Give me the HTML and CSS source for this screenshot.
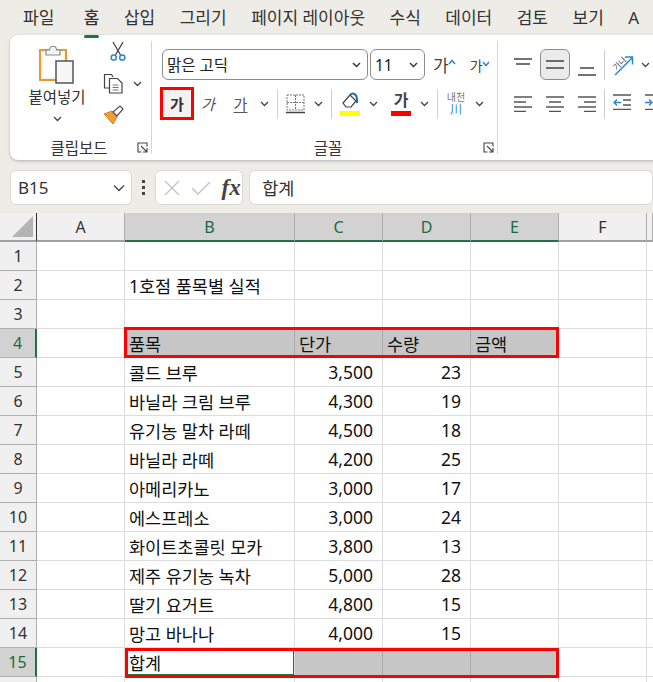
FILE: index.html
```html
<!DOCTYPE html>
<html lang="ko">
<head>
  <meta charset="UTF-8" />
  <title>Excel</title>
  <link rel="stylesheet" href="styles.css">
</head>
<body>
  <!-- Tabs -->
  <div class="tabs">
    <span>파일</span>
    <span class="tab-active">홈</span>
    <span>삽입</span>
    <span>그리기</span>
    <span>페이지 레이아웃</span>
    <span>수식</span>
    <span>데이터</span>
    <span>검토</span>
    <span>보기</span>
    <span>A</span>
  </div>

  <!-- Ribbon -->
  <div class="ribbon">
    <div class="group group-clip">
      <div class="clip-body">
        <div class="paste">
          <svg width="36" height="40" viewBox="0 0 36 40">
            <rect x="1" y="6" width="26" height="30" fill="#fdf3dd" stroke="#e8963c" stroke-width="2"/>
            <rect x="4" y="8" width="20" height="25" fill="#fff"/>
            <path d="M7 11V6h3.500c0-5 7-5 7 0H21v5z" fill="#f4f4f4" stroke="#8a8a8a" stroke-width="1.200"/>
            <rect x="17" y="17" width="17" height="22" fill="#f7f7f7" stroke="#555" stroke-width="1.500"/>
          </svg>
          <span class="paste-label">붙여넣기</span>
          <svg class="chev" width="11" height="7" viewBox="0 0 11 7"><path d="M2 2l3.500 3.500L9 2" fill="none" stroke="#444" stroke-width="1.300"/></svg>
        </div>
        <div class="clip-tools">
          <svg width="16" height="20" viewBox="0 0 16 20">
            <path d="M3 1l7.500 13M13 1L5.500 14" stroke="#444" stroke-width="1.300" fill="none"/>
            <circle cx="3.700" cy="16.500" r="2.600" fill="none" stroke="#2b88c8" stroke-width="1.500"/>
            <circle cx="12.300" cy="16.500" r="2.600" fill="none" stroke="#2b88c8" stroke-width="1.500"/>
          </svg>
          <div class="split">
            <svg width="21" height="21" viewBox="0 0 21 21">
              <path d="M9 15H1.500V1.500H8.500L10 4" fill="#fff" stroke="#444" stroke-width="1.200"/>
              <path d="M6.500 5.500h8l4.500 4.500v10h-12.500z" fill="#fff" stroke="#444" stroke-width="1.200"/>
              <path d="M9.500 12h6M9.500 14.500h6M9.500 17h6" stroke="#777"/>
            </svg>
            <svg class="chev" width="11" height="7" viewBox="0 0 11 7"><path d="M2 2l3.500 3.500L9 2" fill="none" stroke="#444" stroke-width="1.300"/></svg>
          </div>
          <svg width="21" height="20" viewBox="0 0 21 20">
            <path d="M1 9l8-3 5 6-4 7z" fill="#f0a033" stroke="#d97a1e"/>
            <path d="M10 7l7-6 3 3-6 7z" fill="#fff" stroke="#555" stroke-width="1.200"/>
          </svg>
        </div>
      </div>
      <div class="group-foot">
        <span></span>
        <span>클립보드</span>
        <svg class="launcher" width="11" height="11" viewBox="0 0 11 11"><path d="M10 4.500V1H1v9h3.500M4 4l6 6M10 6v4H6" fill="none" stroke="#444" stroke-width="1.100"/></svg>
      </div>
    </div>

    <div class="group group-font">
      <div class="tool-row font-pickers">
        <div class="select select-name">맑은 고딕
          <svg width="11" height="7" viewBox="0 0 11 7"><path d="M2 2l3.500 3.500L9 2" fill="none" stroke="#333" stroke-width="1.400"/></svg>
        </div>
        <div class="select select-size">11
          <svg width="11" height="7" viewBox="0 0 11 7"><path d="M2 2l3.500 3.500L9 2" fill="none" stroke="#333" stroke-width="1.400"/></svg>
        </div>
        <div class="grow-font">가<svg width="8" height="6" viewBox="0 0 8 6"><path d="M1 5l3-3.500L7 5" fill="none" stroke="#2b88c8" stroke-width="1.500"/></svg></div>
        <div class="shrink-font">가<svg width="8" height="6" viewBox="0 0 8 6"><path d="M1 1l3 3.500L7 1" fill="none" stroke="#2b88c8" stroke-width="1.500"/></svg></div>
      </div>
      <div class="tool-row font-tools">
        <div class="btn-bold">가</div>
        <div class="btn-italic">가</div>
        <div class="btn-under">가</div>
        <svg class="chev" width="11" height="7" viewBox="0 0 11 7"><path d="M2 2l3.500 3.500L9 2" fill="none" stroke="#444" stroke-width="1.300"/></svg>
        <i class="sep"></i>
        <div class="split">
          <svg width="19" height="20" viewBox="0 0 19 20">
            <path d="M1 1h17v15H1zM9.500 1v15M1 8.500h17" fill="none" stroke="#777" stroke-dasharray="2 1"/>
            <path d="M0 18.500h19" stroke="#444" stroke-width="1.500"/>
          </svg>
          <svg class="chev" width="11" height="7" viewBox="0 0 11 7"><path d="M2 2l3.500 3.500L9 2" fill="none" stroke="#444" stroke-width="1.300"/></svg>
        </div>
        <i class="sep"></i>
        <div class="split">
          <svg width="20" height="24" viewBox="0 0 20 24">
            <path d="M3 11l7-8 6 6-5 6H6z" fill="#fff" stroke="#444" stroke-width="1.200"/>
            <path d="M10 3c3-3 7-1 7 5v3" fill="none" stroke="#1f6fb0" stroke-width="2"/>
            <rect y="19" width="20" height="5" fill="#ffff00"/>
          </svg>
          <svg class="chev" width="11" height="7" viewBox="0 0 11 7"><path d="M2 2l3.500 3.500L9 2" fill="none" stroke="#444" stroke-width="1.300"/></svg>
        </div>
        <div class="split">
          <div class="font-color">가</div>
          <svg class="chev" width="11" height="7" viewBox="0 0 11 7"><path d="M2 2l3.500 3.500L9 2" fill="none" stroke="#444" stroke-width="1.300"/></svg>
        </div>
        <i class="sep"></i>
        <div class="split">
          <div class="phonetic">내천<b>川</b></div>
          <svg class="chev" width="11" height="7" viewBox="0 0 11 7"><path d="M2 2l3.500 3.500L9 2" fill="none" stroke="#444" stroke-width="1.300"/></svg>
        </div>
      </div>
      <div class="group-foot">
        <span></span>
        <span>글꼴</span>
        <svg class="launcher" width="11" height="11" viewBox="0 0 11 11"><path d="M10 4.500V1H1v9h3.500M4 4l6 6M10 6v4H6" fill="none" stroke="#444" stroke-width="1.100"/></svg>
      </div>
    </div>

    <div class="group group-align">
      <div class="tool-row">
        <div class="al"><svg width="18" height="14" viewBox="0 0 18 14"><path d="M0 1h18M2 6h14" stroke="#444" stroke-width="1.300"/></svg></div>
        <div class="al al-on"><svg width="18" height="14" viewBox="0 0 18 14"><path d="M0 3h18M0 10h18" stroke="#444" stroke-width="1.300"/></svg></div>
        <div class="al al-low"><svg width="18" height="14" viewBox="0 0 18 14"><path d="M2 6h14M0 13h18" stroke="#444" stroke-width="1.300"/></svg></div>
        <i class="sep sep-al"></i>
        <svg width="22" height="24" viewBox="0 0 22 24">
          <text x="1" y="15" font-size="8" transform="rotate(-45 6 12)" fill="#444">가나</text>
          <path d="M3 22L20 5M13 4h7.500v7.500" fill="none" stroke="#2b88c8" stroke-width="1.500"/>
        </svg>
        <svg class="chev chev-or" width="11" height="7" viewBox="0 0 11 7"><path d="M2 2l3.500 3.500L9 2" fill="none" stroke="#444" stroke-width="1.300"/></svg>
      </div>
      <div class="tool-row tools-two">
        <div class="al"><svg width="18" height="16" viewBox="0 0 18 16"><path d="M0 1h18M0 6h12M0 11h18M0 15.500h12" stroke="#555" stroke-width="1.300"/></svg></div>
        <div class="al"><svg width="18" height="16" viewBox="0 0 18 16"><path d="M0 1h18M3 6h12M0 11h18M3 15.500h12" stroke="#555" stroke-width="1.300"/></svg></div>
        <div class="al"><svg width="18" height="16" viewBox="0 0 18 16"><path d="M0 1h18M6 6h12M0 11h18M6 15.500h12" stroke="#555" stroke-width="1.300"/></svg></div>
        <i class="sep sep-al"></i>
        <div class="al-small"><svg width="18" height="16" viewBox="0 0 18 16"><path d="M0 1h18M10 6h8M10 11h8M0 15.500h18" stroke="#555" stroke-width="1.300"/><path d="M8 8.500H1M4 5.500l-3 3 3 3" fill="none" stroke="#2b88c8" stroke-width="1.400"/></svg></div>
        <div class="al-small"><svg width="18" height="16" viewBox="0 0 18 16"><path d="M0 1h18M10 6h8M10 11h8M0 15.500h18" stroke="#555" stroke-width="1.300"/><path d="M0 8.500h7M4 5.500l3 3-3 3" fill="none" stroke="#2b88c8" stroke-width="1.400"/></svg></div>
      </div>
    </div>
  </div>

  <!-- Formula bar -->
  <div class="formula-bar">
    <div class="name-box">B15
      <svg width="14" height="8" viewBox="0 0 14 8"><path d="M2 1.500l5 5 5-5" fill="none" stroke="#444" stroke-width="1.300"/></svg>
    </div>
    <div class="dots"><i></i><i></i><i></i></div>
    <div class="fx-box">
      <svg width="16" height="16" viewBox="0 0 16 16"><path d="M1 1l14 14M15 1L1 15" stroke="#c4c4c4" stroke-width="1.400"/></svg>
      <svg width="20" height="16" viewBox="0 0 20 16"><path d="M1 8l6 6L19 2" fill="none" stroke="#c4c4c4" stroke-width="1.400"/></svg>
      <span class="fx">fx</span>
    </div>
    <div class="formula-input">합계</div>
  </div>

  <!-- Sheet -->
  <div class="sheet">
    <div class="row row-head">
      <div class="corner"><i></i></div>
      <div class="ch">A</div>
      <div class="ch ch-on">B</div>
      <div class="ch ch-on">C</div>
      <div class="ch ch-on">D</div>
      <div class="ch ch-on">E</div>
      <div class="ch">F</div>
      <div class="ch"></div>
    </div>
    <div class="row"><div class="rh">1</div><div class="c"></div><div class="c"></div><div class="c"></div><div class="c"></div><div class="c"></div><div class="c"></div><div class="c"></div></div>
    <div class="row"><div class="rh">2</div><div class="c"></div><div class="c t-over">1호점 품목별 실적</div><div class="c"></div><div class="c"></div><div class="c"></div><div class="c"></div><div class="c"></div></div>
    <div class="row"><div class="rh">3</div><div class="c"></div><div class="c"></div><div class="c"></div><div class="c"></div><div class="c"></div><div class="c"></div><div class="c"></div></div>
    <div class="row"><div class="rh rh-on">4</div><div class="c"></div><div class="c fill">품목</div><div class="c fill">단가</div><div class="c fill">수량</div><div class="c fill">금액</div><div class="c"></div><div class="c"></div></div>
    <div class="row"><div class="rh">5</div><div class="c"></div><div class="c">콜드 브루</div><div class="c num">3,500</div><div class="c num">23</div><div class="c"></div><div class="c"></div><div class="c"></div></div>
    <div class="row"><div class="rh">6</div><div class="c"></div><div class="c">바닐라 크림 브루</div><div class="c num">4,300</div><div class="c num">19</div><div class="c"></div><div class="c"></div><div class="c"></div></div>
    <div class="row"><div class="rh">7</div><div class="c"></div><div class="c">유기농 말차 라떼</div><div class="c num">4,500</div><div class="c num">18</div><div class="c"></div><div class="c"></div><div class="c"></div></div>
    <div class="row"><div class="rh">8</div><div class="c"></div><div class="c">바닐라 라떼</div><div class="c num">4,200</div><div class="c num">25</div><div class="c"></div><div class="c"></div><div class="c"></div></div>
    <div class="row"><div class="rh">9</div><div class="c"></div><div class="c">아메리카노</div><div class="c num">3,000</div><div class="c num">17</div><div class="c"></div><div class="c"></div><div class="c"></div></div>
    <div class="row"><div class="rh">10</div><div class="c"></div><div class="c">에스프레소</div><div class="c num">3,000</div><div class="c num">24</div><div class="c"></div><div class="c"></div><div class="c"></div></div>
    <div class="row"><div class="rh">11</div><div class="c"></div><div class="c">화이트초콜릿 모카</div><div class="c num">3,800</div><div class="c num">13</div><div class="c"></div><div class="c"></div><div class="c"></div></div>
    <div class="row"><div class="rh">12</div><div class="c"></div><div class="c">제주 유기농 녹차</div><div class="c num">5,000</div><div class="c num">28</div><div class="c"></div><div class="c"></div><div class="c"></div></div>
    <div class="row"><div class="rh">13</div><div class="c"></div><div class="c">딸기 요거트</div><div class="c num">4,800</div><div class="c num">15</div><div class="c"></div><div class="c"></div><div class="c"></div></div>
    <div class="row"><div class="rh">14</div><div class="c"></div><div class="c">망고 바나나</div><div class="c num">4,000</div><div class="c num">15</div><div class="c"></div><div class="c"></div><div class="c"></div></div>
    <div class="row"><div class="rh rh-on">15</div><div class="c"></div><div class="c">합계</div><div class="c fill"></div><div class="c fill"></div><div class="c fill"></div><div class="c"></div><div class="c"></div></div>
    <div class="row"><div class="rh">16</div><div class="c"></div><div class="c"></div><div class="c"></div><div class="c"></div><div class="c"></div><div class="c"></div><div class="c"></div></div>

    <!-- Selection and red callouts over the grid -->
    <div class="cell-cursor"></div>
    <div class="callout callout-head"></div>
    <div class="callout callout-total"></div>
  </div>
</body>
</html>
```

FILE: styles.css
```css
* {
  box-sizing: border-box;
}

body {
  margin: 0;
  width: 653px;
  height: 682px;
  overflow: hidden;
  background: #eeece7;
  color: #262626;
  font-family: "Noto Sans", "Noto Sans CJK KR", sans-serif;
}

/* Tabs */
.tabs {
  display: flex;
  gap: 24.500px;
  height: 35px;
  padding: 6px 0 0 23px;
  font-size: 17px;
  line-height: 24px;
  white-space: nowrap;
  color: #333;
}

.tab-active {
  position: relative;
  margin-left: 5px;
  font-weight: 500;
}

.tab-active::after {
  content: "";
  position: absolute;
  left: 0;
  right: 0;
  bottom: -3px;
  height: 3px;
  border-radius: 2px;
  background: #1f7346;
}

/* Ribbon */
.ribbon {
  display: flex;
  width: 700px;
  height: 125px;
  margin-left: 10px;
  border-radius: 8px;
  background: #fff;
  box-shadow: 0 1px 3px rgba(0, 0, 0, 0.25);
}

.group {
  display: flex;
  flex-direction: column;
  height: 113px;
  margin-top: 6px;
  border-right: 1px solid #d5d5d5;
}

.group-clip {
  width: 142px;
}

.group-font {
  width: 346px;
  padding: 8px 0 0 10px;
}

.group-align {
  flex: 1;
  padding: 8px 0 0 9px;
  border-right: none;
}

.group-foot {
  display: grid;
  grid-template-columns: 1fr auto 1fr;
  align-items: center;
  height: 20px;
  margin-top: auto;
  margin-bottom: -2px;
  padding-right: 3px;
  font-size: 15.500px;
  color: #333;
  text-align: center;
}

.launcher {
  justify-self: end;
}

.clip-body {
  display: flex;
  height: 92px;
}

.paste {
  display: flex;
  flex-direction: column;
  align-items: center;
  width: 94px;
  padding: 3px 0 0 0;
  font-size: 15.500px;
  color: #333;
}

.paste-label {
  margin-top: 3px;
  line-height: 20px;
}

.paste .chev {
  margin-top: 8px;
}

.clip-tools {
  display: flex;
  flex-direction: column;
  align-items: flex-start;
  padding: 3px 0 0 -3px;
}

.clip-tools > svg:first-child {
  margin: 0 0 12px 6px;
}

.clip-tools > svg:last-child {
  margin: 11px 0 0 -1px;
}

.clip-tools .split {
  margin-left: -1px;
  gap: 8px;
}

.tool-row {
  display: flex;
  align-items: center;
  height: 31px;
}

.font-pickers {
  gap: 2px;
}

.select {
  display: flex;
  align-items: center;
  justify-content: space-between;
  height: 31px;
  padding: 0 5px 0 4px;
  border: 1px solid #8c8c8c;
  border-radius: 6px;
  font-size: 15.500px;
  color: #222;
}

.select-name {
  width: 206px;
}

.select-size {
  width: 55px;
}

.grow-font,
.shrink-font {
  display: flex;
  align-items: flex-start;
  color: #444;
}

.grow-font {
  margin-left: 6px;
  font-size: 17px;
}

.shrink-font {
  margin-left: 12px;
  font-size: 14px;
}

.grow-font svg {
  margin: 7px 0 0 -1px;
}

.shrink-font svg {
  margin: 6px 0 0 -1px;
}

.font-tools {
  height: 33px;
  margin: 7px 0 0 -2px;
}

.btn-bold {
  display: flex;
  align-items: center;
  justify-content: center;
  width: 34px;
  height: 33px;
  border: 3px solid #ff0000;
  background: #f2f2f2;
  font-size: 15px;
  font-weight: 700;
  color: #333;
}

.btn-italic,
.btn-under {
  font-size: 15px;
  text-align: center;
  color: #555;
}

.btn-italic {
  width: 28px;
  font-style: italic;
}

.btn-under {
  width: 37px;
  text-decoration: underline;
  text-underline-offset: 2px;
}

.sep {
  width: 1px;
  height: 30px;
  margin: 0 8px 0 7px;
  background: #cfcfcf;
}

.split {
  display: flex;
  align-items: center;
  gap: 8px;
}

.split + .split {
  margin-left: 12px;
}

.font-color {
  width: 20px;
  height: 24px;
  border-bottom: 5px solid #ff0000;
  font-size: 16px;
  font-weight: 700;
  line-height: 17px;
  text-align: center;
  color: #444;
}

.phonetic {
  display: flex;
  flex-direction: column;
  align-items: center;
  width: 20px;
  font-size: 10px;
  line-height: 12px;
  white-space: nowrap;
  color: #777;
}

.phonetic b {
  font-weight: 400;
  font-size: 12px;
  line-height: 14px;
  color: #2b88c8;
}

.al {
  display: flex;
  align-items: center;
  justify-content: center;
  width: 32px;
  height: 31px;
}

.al-on {
  width: 30px;
  margin: 0 1px;
  border: 1px solid #8c8c8c;
  border-radius: 6px;
  background: #ebebeb;
}

.al-low {
  padding-top: 8px;
}

.sep-al {
  margin: 0 7px 0 1px;
}

.chev-or {
  margin-left: 6px;
}

.tools-two {
  height: 33px;
  margin-top: 7px;
}

.al-small {
  width: 32px;
  padding-left: 1px;
}

/* Formula bar */
.formula-bar {
  display: flex;
  align-items: center;
  height: 35px;
  margin-top: 10px;
  padding-left: 10px;
}

.name-box,
.fx-box,
.formula-input {
  display: flex;
  align-items: center;
  height: 35px;
  border: 1px solid #dbd9d4;
  border-radius: 6px;
  background: #fff;
}

.name-box {
  justify-content: space-between;
  width: 127px;
  padding: 0 5px 0 7px;
  font-size: 17px;
  color: #333;
}

.dots {
  display: flex;
  flex-direction: column;
  gap: 3px;
  margin: 0 10px;
}

.dots i {
  width: 3px;
  height: 3px;
  background: #444;
}

.fx-box {
  gap: 11px;
  width: 91px;
  padding-left: 8px;
}

.fx {
  margin-left: -1px;
  font-family: "Liberation Serif", serif;
  font-size: 23px;
  font-style: italic;
  font-weight: 700;
  line-height: 1;
  color: #444;
}

.formula-input {
  width: 420px;
  margin-left: 6px;
  padding-left: 12px;
  font-size: 17.500px;
  color: #333;
}

/* Sheet */
.sheet {
  position: relative;
  margin-top: 8px;
  background: #fff;
}

.row {
  display: grid;
  grid-template-columns: 37px 88px 170px 88px 88px 88px 88px 1fr;
  height: 29px;
}

.corner {
  display: flex;
  justify-content: flex-end;
  align-items: flex-end;
  padding: 0 3px 3px 0;
  background: #f0f0f0;
  border-right: 1px solid #333;
  border-bottom: 2px solid #a0a0a0;
}

.corner i {
  width: 21px;
  height: 21px;
  background: #b4b4b4;
  clip-path: polygon(100% 0, 100% 100%, 0 100%);
}

.ch {
  display: flex;
  align-items: center;
  justify-content: center;
  background: #f0f0f0;
  border-right: 1px solid #b0b0b0;
  border-bottom: 2px solid #a0a0a0;
  font-size: 16px;
  color: #333;
}

.ch-on {
  background: #d2d2d2;
  border-bottom: 2px solid #217346;
  color: #1a6b42;
}

.rh {
  display: flex;
  align-items: center;
  justify-content: center;
  background: #f0f0f0;
  border-right: 1px solid #b0b0b0;
  border-bottom: 1px solid #b0b0b0;
  font-size: 16px;
  color: #333;
}

.rh-on {
  background: #d2d2d2;
  border-right: 2px solid #217346;
  color: #1a6b42;
}

.c {
  display: flex;
  align-items: center;
  padding: 0 4px;
  border-right: 1px solid #dcdcdc;
  border-bottom: 1px solid #dcdcdc;
  font-size: 17.500px;
  white-space: nowrap;
  color: #111;
}

.t-over {
  overflow: visible;
}

.num {
  justify-content: flex-end;
  padding-right: 9px;
}

.fill {
  background: #c6c6c6;
  border-right-color: #ababab;
  border-bottom-color: #ababab;
}

.cell-cursor {
  position: absolute;
  left: 126px;
  top: 436px;
  width: 168px;
  height: 26px;
  border: 1px solid #217346;
}

.callout {
  position: absolute;
  border: 3px solid #ff0000;
  pointer-events: none;
}

.callout-head {
  left: 124px;
  top: 114px;
  width: 435px;
  height: 31px;
}

.callout-total {
  left: 125px;
  top: 435px;
  width: 434px;
  height: 30px;
}
```
